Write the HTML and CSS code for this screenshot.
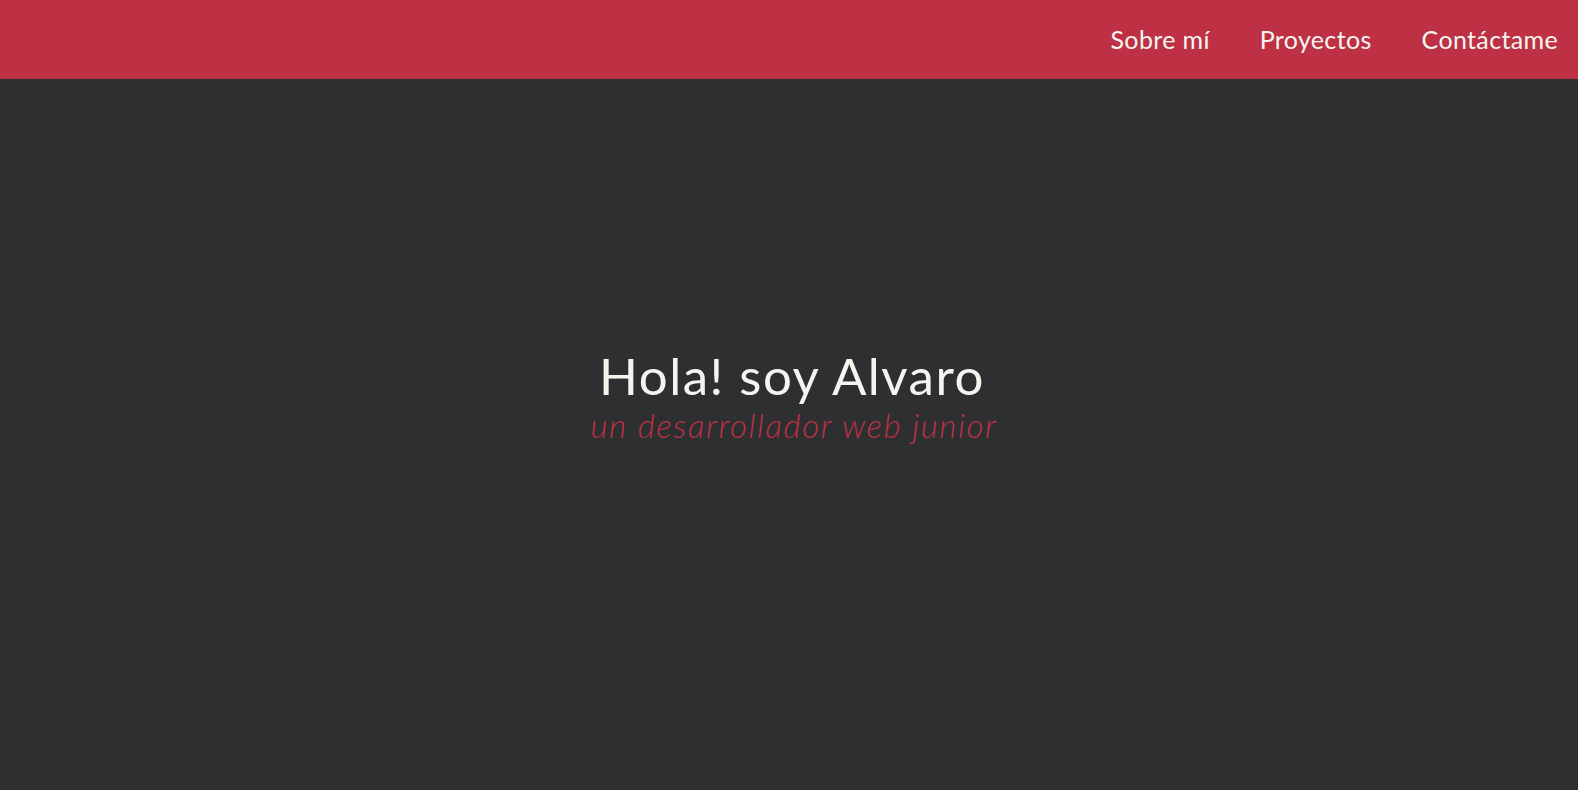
FILE: index.html
```html
<!DOCTYPE html>
<html lang="es">
<head>
<meta charset="utf-8">
<title>Alvaro</title>
<link rel="stylesheet" href="styles.css">
</head>
<body>
<nav class="nav">
  <ul class="nav-list">
    <li><a class="nav-link" href="#about">Sobre mí</a></li>
    <li><a class="nav-link" href="#projects">Proyectos</a></li>
    <li><a class="nav-link" href="#contact">Contáctame</a></li>
  </ul>
</nav>
<section class="welcome">
  <h1 class="welcome-title">Hola! soy Alvaro</h1>
  <p class="welcome-sub">un desarrollador web junior</p>
</section>
</body>
</html>
```

FILE: styles.css
```css
* { box-sizing: border-box; }
html, body { margin: 0; padding: 0; }
body {
  font-family: Lato, "Open Sans", sans-serif;
  background: #2e2f31;
  color: #f5f5f0;
}
.nav {
  position: fixed;
  top: 0;
  left: 0;
  right: 0;
  height: 79px;
  background: #be3144;
  display: flex;
  justify-content: flex-end;
  align-items: center;
  z-index: 10;
}
.nav-list {
  list-style: none;
  margin: 0;
  padding: 0 20px 0 0;
  display: flex;
  gap: 50px;
}
.nav-link {
  color: #f5f5f0;
  text-decoration: none;
  font-size: 25px;
  font-weight: 400;
  line-height: 1;
  letter-spacing: 0.35px;
}
.welcome {
  height: 100vh;
  display: flex;
  flex-direction: column;
  align-items: center;
  justify-content: center;
  text-align: center;
}
.welcome-title {
  margin: 0;
  padding-left: 6px;
  font-size: 51px;
  font-weight: 400;
  line-height: 56px;
  letter-spacing: 1.5px;
}
.welcome-sub {
  margin: 4px 0 0;
  padding-left: 10px;
  font-size: 33px;
  font-style: italic;
  font-weight: 300;
  color: #be3144;
  line-height: 35px;
  letter-spacing: 1.6px;
}
```
